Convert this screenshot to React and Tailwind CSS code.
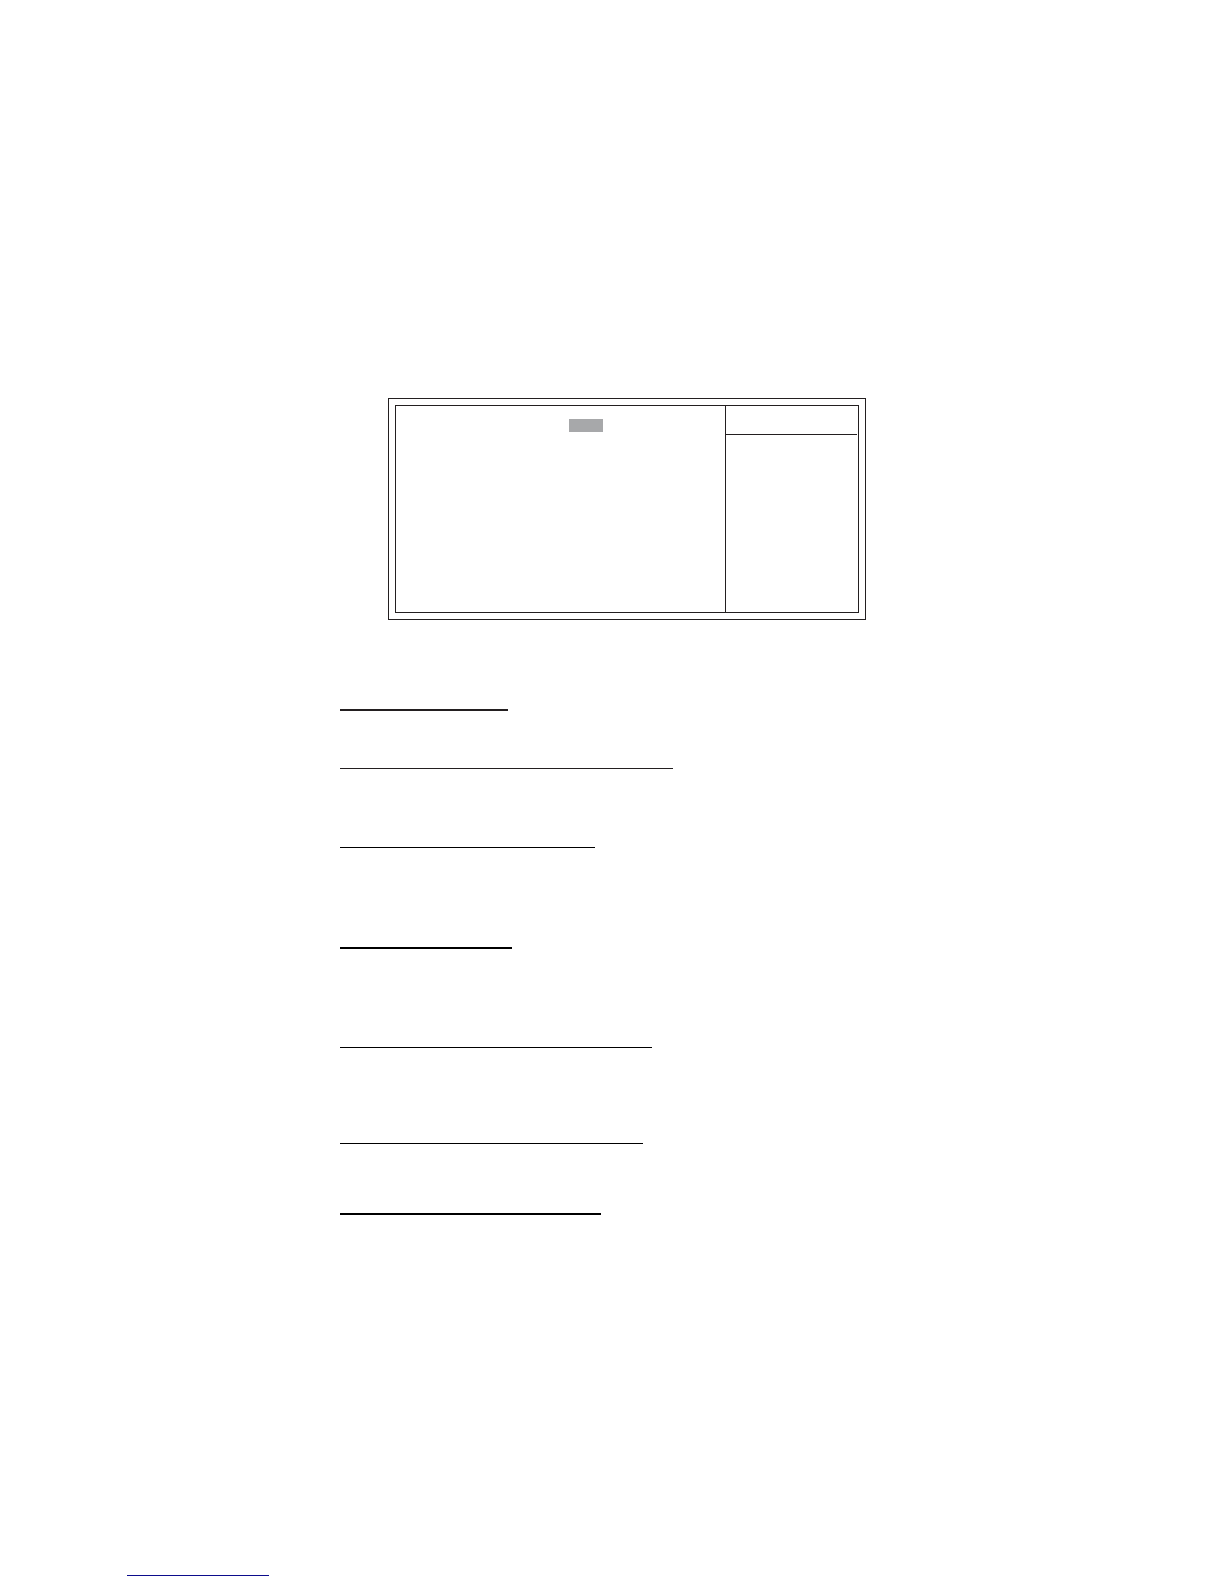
import React from 'react';

const rules = [
  { id: 1, className: 'h-[91px] w-[168px] border-b-2 border-[#231f20]' },
  { id: 2, className: 'h-[58px] w-[333px] border-b border-[#231f20]' },
  { id: 3, className: 'h-[79px] w-[255px] border-b border-black' },
  { id: 4, className: 'h-[101px] w-[172px] border-b-2 border-black' },
  { id: 5, className: 'h-[99px] w-[312px] border-b border-black' },
  { id: 6, className: 'h-[96px] w-[303px] border-b border-black' },
  { id: 7, className: 'h-[71px] w-[261px] border-b-2 border-black' },
];

const SetupPanel = () => (
  <section className="ml-12 w-full max-w-[478px] border border-[#231f20] p-1.5">
    <div className="flex h-52 border border-[#231f20]">
      {/* Settings column with the selected value */}
      <div className="flex-1 pl-[173px] pt-[13px]">
        <div className="h-[13px] w-[34px] bg-[#a7a8aa]" />
      </div>

      {/* Help column */}
      <div className="w-[133px] border-l border-[#231f20]">
        <div className="mr-px h-[29px] border-b border-[#231f20]" />
      </div>
    </div>
  </section>
);

const App = () => {
  return (
    <div className="flex min-h-screen flex-col justify-between bg-white">
      <main className="pl-[340px] pt-[398px]">
        <SetupPanel />
        {rules.map((rule) => (
          <div key={rule.id} className={rule.className} />
        ))}
      </main>

      <footer className="pb-2 pl-[127px]">
        <div className="w-[142px] border-b border-[#0c0c8c]" />
      </footer>
    </div>
  );
};

export default App;
